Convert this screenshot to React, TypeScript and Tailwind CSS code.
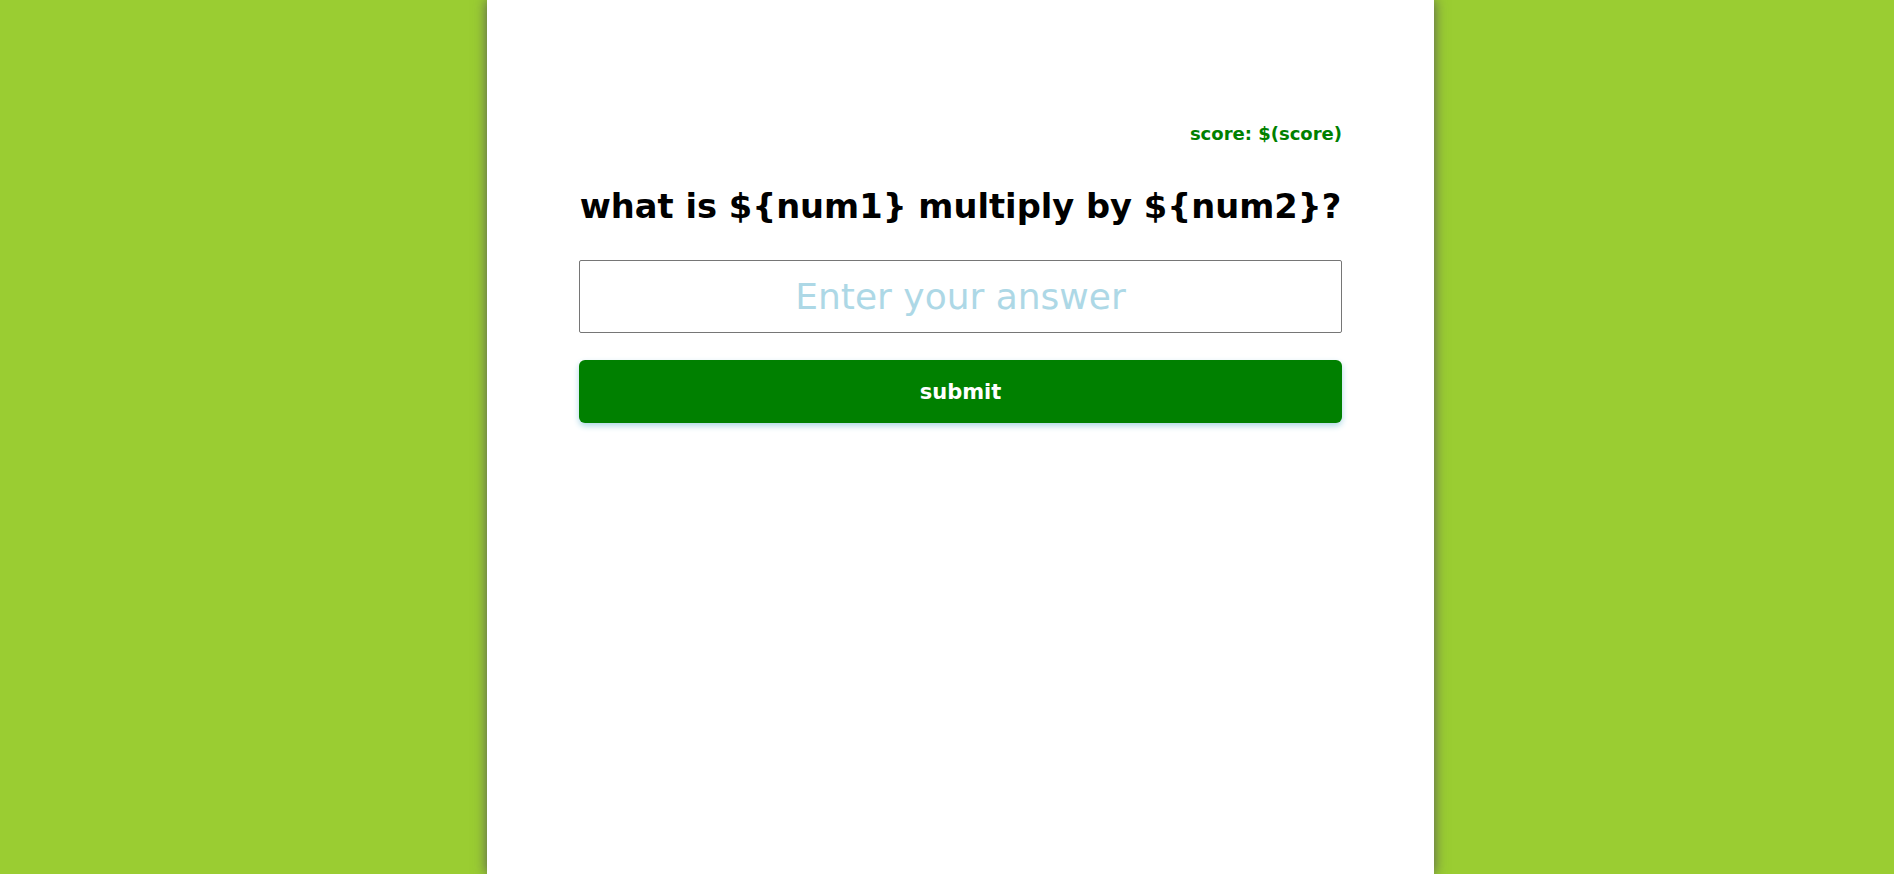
const font = "font-['Comic_Sans_MS','Comic_Sans','DejaVu_Sans',sans-serif]";

export default function App() {
  return (
    <div className={`min-h-screen bg-[#9acd32] flex ${font}`}>
      {/* Card */}
      <div className="ml-[487px] w-[947px] min-h-screen bg-white shadow-[0_0_12px_#555] px-[92px] pt-[120px]">
        <p className="text-right text-[18px] leading-[27px] font-bold text-[#008000]">
          score: $(score)
        </p>
        <h1 className="mt-[36px] text-center text-[33.7px] leading-[48px] font-bold text-black whitespace-nowrap">
          what is ${"{"}num1{"}"} multiply by ${"{"}num2{"}"}?
        </h1>
        <form className="mt-[29px] flex flex-col" onSubmit={(e) => e.preventDefault()}>
          <input
            type="text"
            placeholder="Enter your answer"
            className="h-[73px] w-full border border-[#767676] rounded-[2px] text-center text-[36px] outline-none placeholder:text-[#add8e6]"
          />
          <button
            type="submit"
            className="mt-[27px] h-[63px] w-full rounded-[6px] bg-[#008000] text-white text-[21px] font-bold pt-[3px] shadow-[0_3px_6px_#add8e6]"
          >
            submit
          </button>
        </form>
      </div>
    </div>
  );
}
